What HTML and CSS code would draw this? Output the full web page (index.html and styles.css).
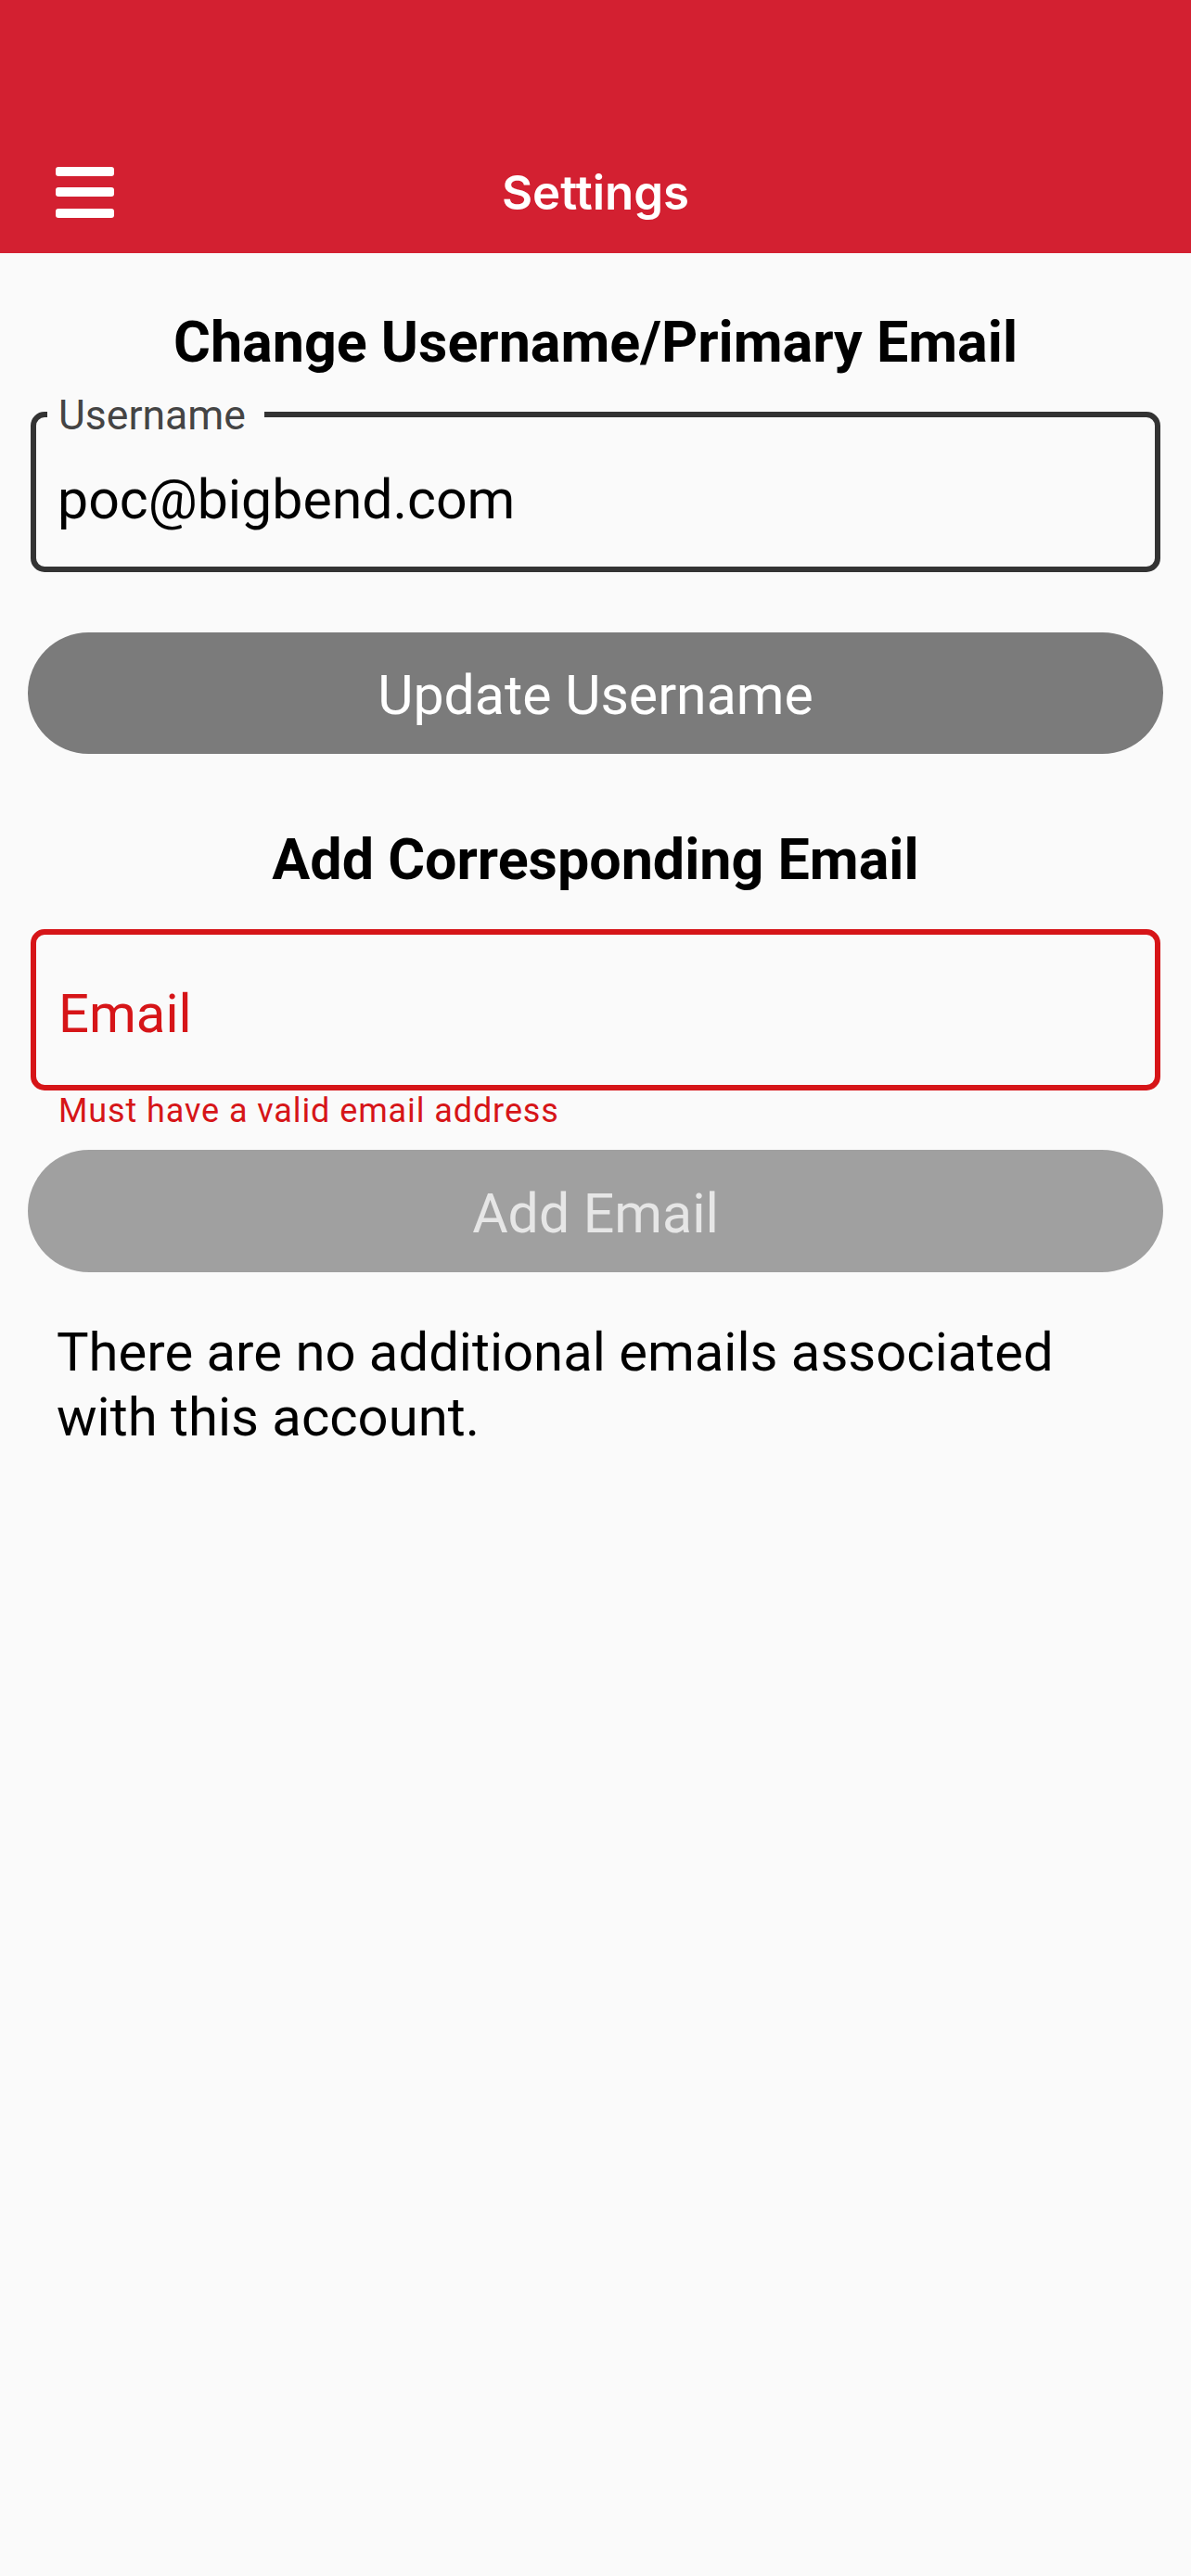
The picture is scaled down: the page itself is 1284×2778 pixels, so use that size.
FILE: index.html
```html
<!DOCTYPE html>
<html lang="en">
<head>
  <meta charset="UTF-8">
  <meta name="viewport" content="width=device-width, initial-scale=1.0">
  <title>Settings</title>
  <link rel="stylesheet" href="styles.css">
</head>
<body>
  <header class="topbar">
    <div class="navbar">
      <button class="menu-btn" aria-label="Menu">
        <span></span><span></span><span></span>
      </button>
      <h1 class="title">Settings</h1>
      <div></div>
    </div>
  </header>

  <main class="content">
    <h2 class="section-title first">Change Username/Primary Email</h2>
    <div class="field field-focused">
      <span class="field-label">Username</span>
      <div class="field-value">poc@bigbend.com</div>
    </div>
    <button class="pill-btn">Update Username</button>

    <h2 class="section-title">Add Corresponding Email</h2>
    <div class="field field-error">
      <div class="field-placeholder">Email</div>
    </div>
    <p class="helper-error">Must have a valid email address</p>
    <button class="pill-btn pill-btn-disabled" disabled>Add Email</button>

    <p class="empty-note">There are no additional emails associated with this account.</p>
  </main>
</body>
</html>
```

FILE: styles.css
```css
body {
  margin: 0;
  background: #fafafa;
  font-family: Roboto, "Liberation Sans", sans-serif;
  color: #000;
}
.topbar {
  background: #d32031;
  height: 273px;
  padding-top: 141px;
  box-sizing: border-box;
}
.navbar {
  height: 132px;
  display: grid;
  grid-template-columns: 1fr auto 1fr;
  align-items: center;
}
.menu-btn {
  justify-self: start;
  margin-left: 60px;
  padding: 0;
  border: none;
  background: none;
  display: flex;
  flex-direction: column;
  gap: 12.5px;
  cursor: pointer;
}
.menu-btn span {
  display: block;
  width: 63px;
  height: 10px;
  border-radius: 3px;
  background: #fff;
}
.title {
  margin: 0;
  font-family: Inter, Roboto, sans-serif;
  font-weight: 600;
  font-size: 51px;
  color: #fff;
}
.content {
  padding: 0 30px;
}
.section-title {
  margin: 78px 0 0;
  font-size: 61px;
  line-height: 72px;
  font-weight: 700;
  text-align: center;
}
.section-title.first {
  margin-top: 60px;
}
.field {
  position: relative;
  margin: 39px 3px 0;
  height: 173px;
  box-sizing: border-box;
  border: 6px solid #333;
  border-radius: 15px;
  background: #fafafa;
}
.field-label {
  position: absolute;
  top: -24px;
  left: 12px;
  padding: 0 20px 0 12px;
  background: #fafafa;
  font-size: 44.5px;
  line-height: 44px;
  color: #444;
}
.field-value {
  padding: 55px 0 0 23px;
  font-size: 59px;
  line-height: 68px;
}
.field-error {
  height: 174px;
  border-color: #d61518;
}
.field-placeholder {
  padding: 51px 0 0 24px;
  font-size: 58px;
  line-height: 68px;
  color: #d61518;
}
.helper-error {
  margin: 1px 0 0;
  padding-left: 33px;
  font-size: 36px;
  line-height: 43px;
  letter-spacing: 0.9px;
  color: #d61518;
}
.pill-btn {
  display: block;
  width: 100%;
  height: 131px;
  margin-top: 65px;
  padding: 4px 0 0;
  border: none;
  border-radius: 66px;
  background: #7b7b7b;
  color: #fff;
  font-family: Roboto, sans-serif;
  font-size: 59px;
  line-height: 127px;
  cursor: pointer;
}
.pill-btn-disabled {
  height: 132px;
  margin-top: 20px;
  background: #a0a0a0;
  color: #e6e6e6;
  cursor: default;
}
.empty-note {
  margin: 51px 0 0;
  padding: 0 30px 0 31px;
  font-size: 58px;
  line-height: 70px;
}
```
